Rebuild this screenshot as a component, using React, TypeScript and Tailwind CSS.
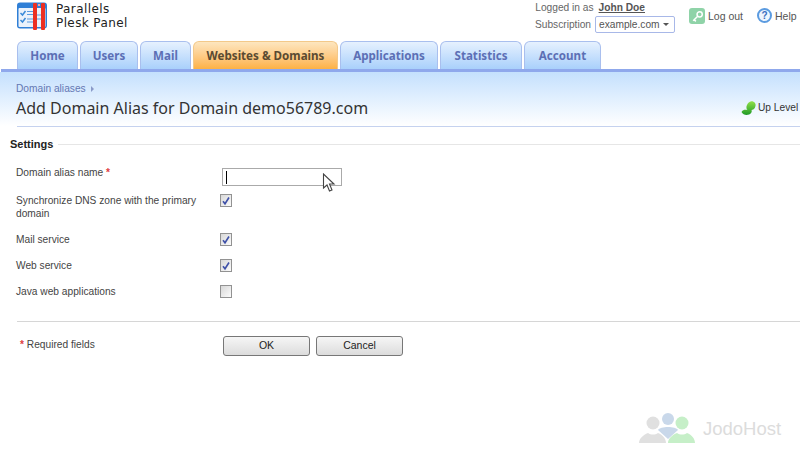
import React from "react";

const font = { fontFamily: '"Noto Sans", sans-serif' };
const small = { fontFamily: '"Liberation Sans", sans-serif' };
const logoFont = { fontFamily: '"DejaVu Sans", sans-serif' };

function Logo() {
  return (
    <svg width="32" height="30" viewBox="0 0 32 30" className="shrink-0">
      <rect x="0" y="1.5" width="30" height="26" rx="3" fill="#2f7fd6" />
      <rect x="1.5" y="7" width="27" height="19" rx="1" fill="#eaf2fb" />
      <path d="M3.5 12l2 2 3-4M3.5 19l2 2 3-4" stroke="#3a8ad8" strokeWidth="1.5" fill="none" />
      <path d="M10 10.5h6M10 13.5h6M10 18h6M10 21h6" stroke="#5a9be0" strokeWidth="1" />
      <path d="M20 14h5M20 18h5" stroke="#5a9be0" strokeWidth="1" />
      <rect x="16" y="2" width="4" height="27" rx="1" fill="#ec2f22" />
      <rect x="24" y="2" width="4" height="27" rx="1" fill="#ec2f22" />
      <rect x="21" y="3" width="2" height="2" fill="#f8a0a0" />
    </svg>
  );
}

function Tab({ label, w, active }: { label: string; w: string; active?: boolean }) {
  return (
    <div
      className={
        active
          ? `${w} h-[28px] rounded-t-[6px] border border-b-0 border-[#f3c98a] bg-gradient-to-b from-[#fde6bf] to-[#fdb143] flex items-center justify-center font-bold text-[11.6px] text-[#5a4a32]`
          : `${w} h-[28px] rounded-t-[6px] border border-b-0 border-[#a9bfee] bg-gradient-to-b from-[#e6f1fe] to-[#a9d0fb] flex items-center justify-center font-bold text-[11.6px] text-[#5c6fb5]`
      }
    >
      {label}
    </div>
  );
}

function Check({ on }: { on?: boolean }) {
  return (
    <div className="w-[12px] h-[13px] border border-[#929292] bg-gradient-to-br from-[#d8d8d8] to-[#fbfbfb] flex items-center justify-center">
      {on && (
        <svg width="10" height="10" viewBox="0 0 10 10">
          <path d="M2 5.2l2 2.6L8 1.5" stroke="#3f51a8" strokeWidth="1.6" fill="none" />
        </svg>
      )}
    </div>
  );
}

function Row({ label, on, h }: { label: string; on?: boolean; h: string }) {
  return (
    <div className={`flex ${h}`}>
      <div className="w-[204px] text-[10.2px] leading-[13px] text-[#444] pr-[4px]" style={small}>
        {label}
      </div>
      <div>
        <Check on={on} />
      </div>
    </div>
  );
}

function Btn({ label, w }: { label: string; w: string }) {
  return (
    <div
      className={`${w} h-[20px] rounded-[3px] border border-[#777] bg-gradient-to-b from-[#f6f6f6] to-[#dcdcdc] flex items-center justify-center text-[10.5px] text-[#222]`}
      style={small}
    >
      {label}
    </div>
  );
}

export default function App() {
  return (
    <div className="relative w-[800px] h-[457px] bg-white overflow-hidden" style={font}>
      {/* header */}
      <div className="h-[41px] flex justify-between">
        <div className="flex pl-[17px] pt-[1px] gap-[7px]">
          <Logo />
          <div className="text-[12px] leading-[14px] text-[#222] tracking-[0.4px] pt-[1px]" style={logoFont}>
            <div>Parallels</div>
            <div>Plesk Panel</div>
          </div>
        </div>
        <div className="flex" style={small}>
          <div className="flex flex-col items-end pr-[14px]">
            <div className="h-[15px] pr-[30px] flex items-center gap-[5px] text-[10.2px] text-[#666]">
              <span>Logged in as</span>
              <span className="font-bold underline text-[#555]">John Doe</span>
            </div>
            <div className="mt-[1px] flex items-center gap-[4px] text-[10.2px] text-[#666]">
              <span>Subscription</span>
              <div className="w-[80px] h-[17px] border border-[#a8b8e8] rounded-[2px] flex items-center justify-between pl-[3px] pr-[5px] text-[#555]">
                <span>example.com</span>
                <span className="w-0 h-0 border-x-[3px] border-x-transparent border-t-[3px] border-t-[#555]" />
              </div>
            </div>
          </div>
          <div className="flex items-start pt-[8px] gap-[3px] text-[10.5px] text-[#555]">
            <div className="w-[16px] h-[16px] rounded-[3px] bg-[#8fd3a8] flex items-center justify-center">
              <svg width="13" height="13" viewBox="0 0 12 12">
                <circle cx="8" cy="4" r="2.4" fill="none" stroke="#fff" strokeWidth="1.4" />
                <path d="M6.2 5.8L2 10M3 9l1.5 1.5" stroke="#fff" strokeWidth="1.4" fill="none" />
              </svg>
            </div>
            <span className="leading-[16px] w-[34px] whitespace-nowrap">Log out</span>
            <div className="ml-[12px] w-[15px] h-[15px] rounded-full border-2 border-[#5b9be0] bg-[#eef5fd] flex items-center justify-center text-[10px] font-bold text-[#3a6fc0]">?</div>
            <span className="leading-[16px] w-[25px]">Help</span>
          </div>
        </div>
      </div>

      {/* tabs */}
      <div className="flex pl-[17px] gap-[2px]">
        <Tab label="Home" w="w-[61px]" />
        <Tab label="Users" w="w-[58px]" />
        <Tab label="Mail" w="w-[51px]" />
        <Tab label="Websites & Domains" w="w-[145px]" active />
        <Tab label="Applications" w="w-[98px]" />
        <Tab label="Statistics" w="w-[82px]" />
        <Tab label="Account" w="w-[77px]" />
      </div>

      {/* title band */}
      <div className="ml-[1px] h-[3px] bg-[#8fa8ec]" />
      <div className="h-[54px] bg-gradient-to-b from-[#c4e0fd] to-white px-[16px]">
        <div className="pt-[10px] flex items-center gap-[5px] text-[10.2px] leading-[13px] text-[#6478b4]" style={small}>
          <span>Domain aliases</span>
          <span className="w-0 h-0 border-y-[3px] border-y-transparent border-l-[3px] border-l-[#8a9ac8]" />
        </div>
        <div className="mt-[2px] flex items-center justify-between">
          <div className="text-[16px] leading-[22px] text-[#333]">Add Domain Alias for Domain demo56789.com</div>
          <div className="flex items-center gap-[1px] text-[10.2px] text-[#333] -mr-[15px]" style={small}>
            <svg width="17" height="16" viewBox="0 0 16 16">
              <defs>
                <linearGradient id="ul" x1="0" y1="0" x2="0" y2="1">
                  <stop offset="0" stopColor="#8fe04a" />
                  <stop offset="1" stopColor="#1f9a26" />
                </linearGradient>
              </defs>
              <path d="M1 12C3 9 5 10 7 10C5 8 6 4 9 2C12 0 16 3 15 6C14.5 9 12 10 11 10C12 12 10 15 6 15C4 15 2 14 1 12z" fill="url(#ul)" />
            </svg>
            <span className="w-[41px] whitespace-nowrap">Up Level</span>
          </div>
        </div>
      </div>
      <div className="ml-[17px] h-[1px] bg-[#c5d2ef]" />

      {/* settings */}
      <div className="pt-[11px]" style={small}>
        <div className="flex items-center pl-[10px] gap-[5px]">
          <span className="text-[11px] leading-[13px] font-bold text-[#222]">Settings</span>
          <div className="flex-1 h-[1px] bg-[#e6e6e6]" />
        </div>
        <div className="pl-[16px] pt-[17px]">
          <div className="flex h-[26px]">
            <div className="w-[206px] text-[10.2px] leading-[13px] text-[#444] -mt-[2px]">
              Domain alias name <span className="text-[#e04040] font-bold">*</span>
            </div>
            <div className="w-[120px] h-[18px] border border-[#aaa] bg-white flex items-center pl-[3px]">
              <div className="w-[1px] h-[13px] bg-black" />
            </div>
          </div>
          <Row label="Synchronize DNS zone with the primary domain" on h="h-[39px]" />
          <Row label="Mail service" on h="h-[26px]" />
          <Row label="Web service" on h="h-[26px]" />
          <Row label="Java web applications" h="h-[26px]" />
        </div>
        <div className="ml-[17px] mt-[10px] h-[1px] bg-[#d6d6d6]" />
        <div className="flex pt-[14px] pl-[20px]">
          <div className="w-[203px] text-[10.2px] leading-[13px] text-[#444] pt-[2px]">
            <span className="text-[#e04040] font-bold">*</span> Required fields
          </div>
          <div className="flex gap-[6px]">
            <Btn label="OK" w="w-[87px]" />
            <Btn label="Cancel" w="w-[87px]" />
          </div>
        </div>
      </div>

      {/* mouse cursor */}
      <svg className="absolute left-[322px] top-[173px]" width="14" height="20" viewBox="0 0 14 20">
        <path d="M1.5 1v14l3.5-3 2.5 6 2.5-1-2.5-6h4.5z" fill="#fff" stroke="#444" strokeWidth="1.1" />
      </svg>

      {/* watermark */}
      <div className="absolute left-[639px] top-[413px] flex items-center gap-[8px]">
        <svg width="56" height="32" viewBox="0 0 56 32">
          <circle cx="29" cy="6" r="6" fill="#c9d8ea" />
          <path d="M19 17c2-4 18-4 20 0l-10 9z" fill="#c9d8ea" />
          <circle cx="14" cy="10" r="6.5" fill="#e0e0e0" />
          <path d="M0 30c0-4 4-8 9-10 3 2 7 2 10 0 5 2 8 6 8 10z" fill="#e0e0e0" />
          <circle cx="43" cy="10" r="6.5" fill="#c6efc8" />
          <path d="M29 30c0-4 4-8 9-10 3 2 7 2 10 0 5 2 8 6 8 10z" fill="#c6efc8" />
        </svg>
        <span className="text-[18.5px] leading-[22px] text-[#dcdcdc]" style={small}>JodoHost</span>
      </div>
    </div>
  );
}
